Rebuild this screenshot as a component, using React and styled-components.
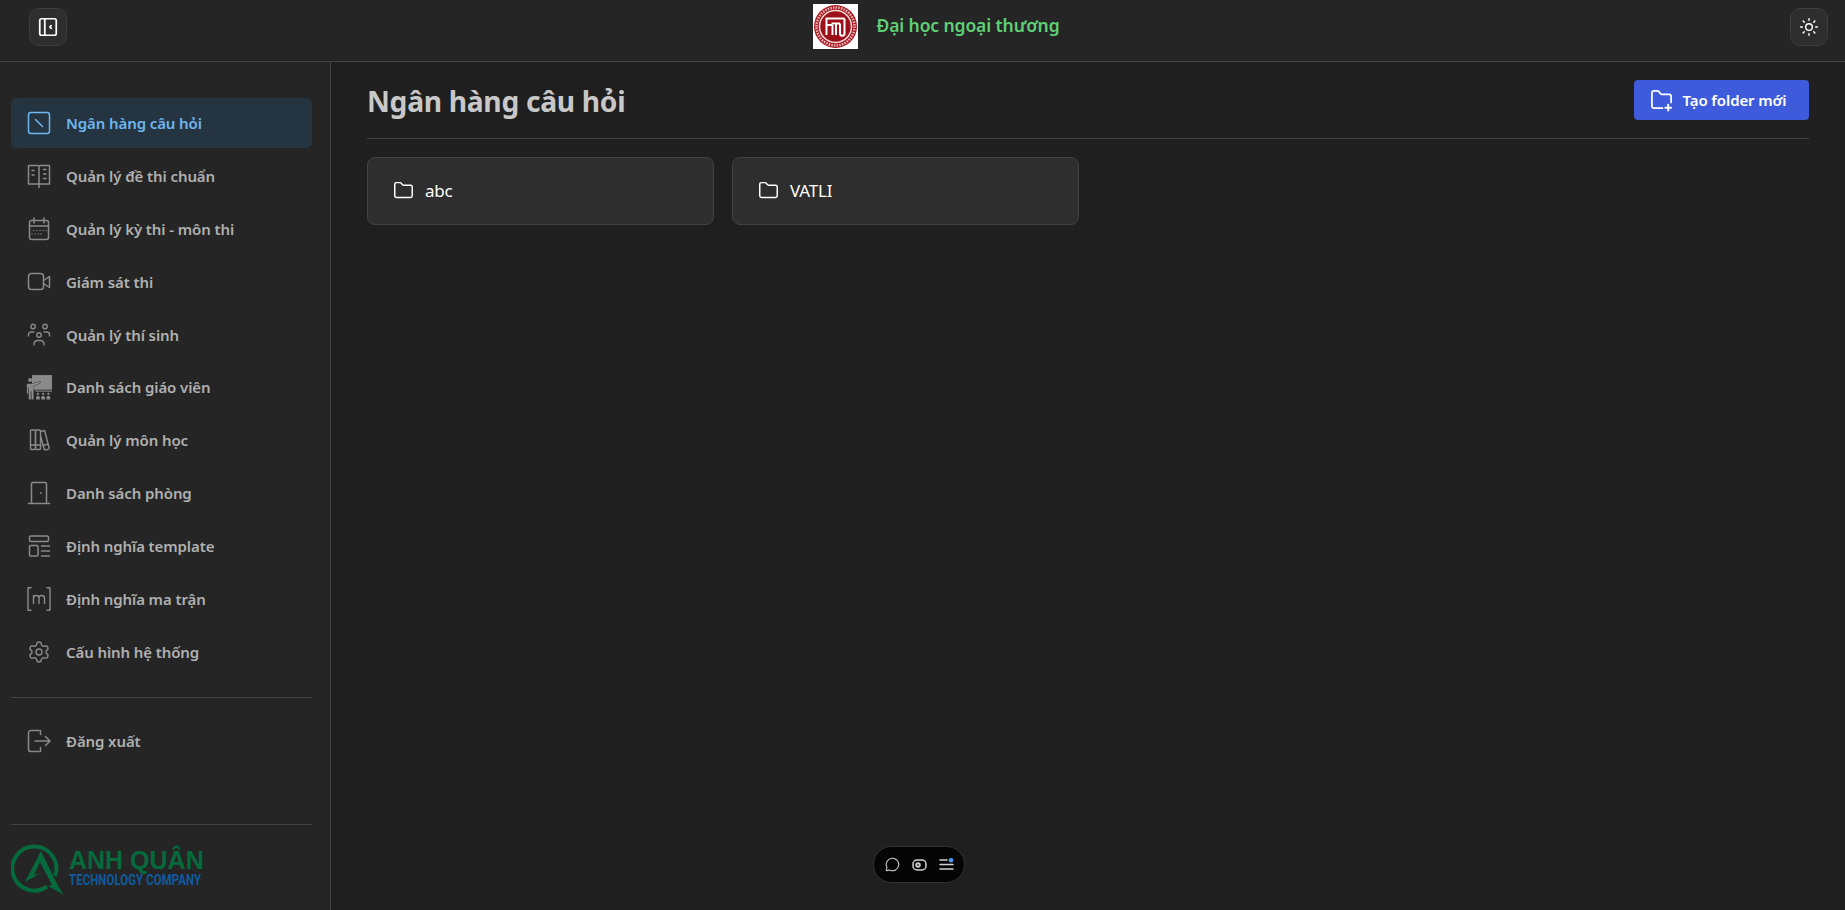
import React from 'react';
import styled, { createGlobalStyle } from 'styled-components';
import { Settings, Sun, Folder, MessageCircle } from 'lucide-react';

const Global = createGlobalStyle`
  html, body { margin: 0; padding: 0; height: 100%; background: #1f1f1f; }
  #root { height: 100%; }
  * { box-sizing: border-box; }
`;
const Page = styled.div`
  width: 1845px; height: 910px; overflow: hidden; display: flex; flex-direction: column;
  font-family: "Noto Sans", "Open Sans", sans-serif; background: #1f1f1f; position: relative;
`;
const Header = styled.header`
  height: 62px; flex: none; background: #252525; border-bottom: 1px solid #424242;
  display: flex; align-items: center; justify-content: space-between; padding: 0 17px 8px 29px;
`;
const IconButton = styled.button`
  width: 38px; height: 38px; border-radius: 10px; background: #2e2e2e; border: 1px solid #3d3d3d;
  display: flex; align-items: center; justify-content: center; color: #fff; padding: 0;
`;
const Brand = styled.div`display: flex; align-items: center; gap: 18px; margin-left: 16px;`;
const BrandName = styled.span`font-size: 17.5px; font-weight: 600; color: #5fcf75; letter-spacing: -0.1px; margin-top: -3px;`;
const Body = styled.div`flex: 1; display: flex; min-height: 0;`;
const Sidebar = styled.aside`
  width: 331px; flex: none; background: #252525; border-right: 1px solid #424242;
  padding: 36px 18px 0 11px; display: flex; flex-direction: column;
`;
const Nav = styled.nav`display: flex; flex-direction: column; gap: 2.9px;`;
const Item = styled.div`
  height: 50px; display: flex; align-items: center; gap: 15px; padding-left: 16px; border-radius: 6px;
  font-size: 15px; font-weight: 600; letter-spacing: -0.1px;
  background: ${p => (p.$active ? '#243441' : 'transparent')};
  color: ${p => (p.$active ? '#6fb6ee' : '#b0b0b0')};
  & > svg { flex: none; color: ${p => (p.$active ? '#6fb6ee' : '#8a8a8a')}; }
`;
const Rule = styled.div`height: 1px; background: #424242;`;
const TopRule = styled(Rule)`margin-top: 20.5px; margin-bottom: 17.5px;`;
const BottomRule = styled(Rule)`margin-top: 58px; margin-bottom: 17px;`;
const Logo = styled.div`display: flex; align-items: flex-start; gap: 3px; height: 56px;`;
const LogoText = styled.div`display: flex; flex-direction: column; margin-top: 5px;`;
const LogoName = styled.span`
  font-family: "Liberation Sans", sans-serif; font-weight: 700; font-size: 25px; line-height: 26px; color: #056a3c;
`;
const LogoSub = styled.span`
  font-family: "Roboto", sans-serif; font-weight: 700; font-size: 14px; line-height: 14px; color: #0d5ba0; letter-spacing: 0.15px;
  white-space: nowrap; transform: scaleX(0.81); transform-origin: left center; width: 150px;
`;
const Main = styled.main`flex: 1; padding: 18px 36px 0; min-width: 0; background: #1f1f1f;`;
const TitleRow = styled.div`
  height: 59px; display: flex; align-items: flex-start; justify-content: space-between; border-bottom: 1px solid #424242;
`;
const Title = styled.h1`
  margin: 0; font-size: 28.2px; line-height: 42px; font-weight: 700; color: #c8c8c8; letter-spacing: -0.3px;
`;
const PrimaryButton = styled.button`
  width: 175px; height: 40px; background: #3d5bdb; border: 0; border-radius: 4px; color: #fff;
  display: flex; align-items: center; justify-content: center; gap: 10px; padding: 0 7px 0 0;
  font-family: inherit; font-size: 15px; font-weight: 600; letter-spacing: -0.1px;
`;
const Cards = styled.div`display: flex; gap: 18px; margin-top: 18px;`;
const Card = styled.div`
  width: 347px; height: 68px; background: #2e2e2e; border: 1px solid #424242; border-radius: 8px;
  display: flex; align-items: center; gap: 11px; padding: 0 0 2px 25px; color: #fff;
  font-size: 17px; letter-spacing: -0.2px;
`;
const Dock = styled.div`
  position: absolute; left: 873px; top: 846px; width: 92px; height: 37px; border-radius: 19px;
  background: #050505; border: 1px solid #333; display: flex; align-items: center; justify-content: center; gap: 12px;
  color: #d0d0d0;
`;

const Svg = ({ children, size = 24, ...p }) => (
  <svg width={size} height={size} viewBox="0 0 24 24" fill="none" stroke="currentColor" strokeWidth="1.5" strokeLinecap="round" strokeLinejoin="round" {...p}>{children}</svg>
);
const TeacherSvg = styled(Svg)`margin: 0 -1px;`;
const SidebarToggle = () => (
  <Svg size={22} strokeWidth="1.9"><rect x="3" y="3" width="18" height="18" rx="2" /><path d="M8.500 3v18M15.500 10.500L14 12l1.500 1.500" /></Svg>
);
const Bank = () => (<Svg><rect x="1.500" y="1.500" width="21" height="21" rx="2.500" /><path d="M8.500 8.500l7 7" /></Svg>);
const Book = () => (<Svg><path d="M1.500 1.500h9.500l1 1 1-1h9.500v18.500h-9.500l-1 1-1-1H1.500zM12 2.500v21" /><path d="M5 6.500h2M5 11h2M16.500 5.500h2.500M16.500 10h2.500M16.500 14.500h2.500" /></Svg>);
const Calendar = () => (<Svg><rect x="2.500" y="3.500" width="19" height="19" rx="2" /><path d="M7 1v5M17 1v5M2.500 9h19" /><path d="M7 13.500h.01M10 13.500h.01M13 13.500h.01M16 13.500h.01M19 13.500h.01M5 17h.01M8 17h.01M11 17h.01M14 17h.01" strokeWidth="1.300" /></Svg>);
const Video = () => (<Svg><rect x="1.500" y="3.500" width="15" height="16" rx="3" /><path d="M16.500 10.500l6-4v11l-6-4" /></Svg>);
const Users = () => (<Svg strokeWidth="1.400"><circle cx="6" cy="3.500" r="2.200" /><circle cx="18" cy="3.500" r="2.200" /><circle cx="12" cy="12" r="2.200" /><path d="M1.500 13v-1.500a2.500 2.500 0 0 1 2.500-2.500h3M22.500 13v-1.500a2.500 2.500 0 0 0-2.500-2.500h-3M7 22v-1a3.500 3.500 0 0 1 3.500-3.500h3A3.500 3.500 0 0 1 17 21v1" /></Svg>);
const Teacher = () => (
  <TeacherSvg size={26} stroke="none" fill="currentColor">
    <rect x="5.500" y="1" width="18.500" height="13.500" />
    <rect x="8.500" y="15.300" width="15.500" height="1" />
    <circle cx="3.800" cy="5.500" r="1.800" />
    <path d="M.8 9h5.400l6.800-2.200v1.600L7 11v12.500H5v-7.500h-.6v7.500H2.500V12.500l-.5.300V18H.8z" stroke="#252525" strokeWidth=".7" style={{ paintOrder: 'stroke' }} />
    <circle cx="11" cy="18.300" r="1.100" /><circle cx="15.800" cy="18.300" r="1.100" /><circle cx="20.600" cy="18.300" r="1.100" />
    <path d="M9.300 23.500v-2.500l1.700-1 1.700 1v2.500zM14.100 23.500v-2.500l1.700-1 1.700 1v2.500zM18.900 23.500v-2.500l1.700-1 1.700 1v2.500z" />
  </TeacherSvg>
);
const Books = () => (<Svg strokeWidth="1.400"><rect x="3.500" y="2" width="5" height="19.500" rx="1" /><rect x="8.500" y="2" width="5" height="19.500" rx="1" /><path d="M13.600 3.500l4-1 4.500 17.500a1 1 0 0 1-.7 1.200l-3 .7a1 1 0 0 1-1.200-.7L13.600 8M3.500 17h10M15.500 17.500l5-1.300" /></Svg>);
const Door = () => (<Svg><path d="M1.500 22.500h21M4.500 22.500V3a1.500 1.500 0 0 1 1.500-1.500h12A1.500 1.500 0 0 1 19.500 3v19.500" /><path d="M14 12h.01" strokeWidth="1.800" /></Svg>);
const Template = () => (<Svg strokeWidth="1.500"><rect x="2.500" y="2" width="19" height="5.500" rx="1.500" /><rect x="2.500" y="11.500" width="8.500" height="10.500" rx="1" /><path d="M14.500 12h8M14.500 17h8M14.500 22h8" /></Svg>);
const Matrix = () => (<Svg strokeWidth="1.400"><path d="M4 .8H1v22.400h3M20 .8h3v22.400h-3" /><path d="M6.500 16.500V8.500M6.500 11c0-1.500 1-2.500 2.500-2.500s3 1 3 2.500v5.500M12 11c0-1.500 1-2.500 2.500-2.500s3 1 3 2.500v5.500" /></Svg>);
const Logout = () => (<Svg><path d="M12 1.500H4A2.500 2.500 0 0 0 1.500 4v16A2.500 2.500 0 0 0 4 22.500h8M13.500 22.500v-4M13.500 1.500v4" /><path d="M8 12h15M18.500 7.500L23 12l-4.500 4.500" /></Svg>);
const NewFolder = () => (
  <Svg size={23} strokeWidth="1.800"><path d="M13 20H4a2 2 0 0 1-2-2V4a2 2 0 0 1 2-2h4.500l3 3.500H20a2 2 0 0 1 2 2V14" /><path d="M19 16.500v6M16 19.500h6" strokeWidth="2" /></Svg>
);

const Seal = () => (
  <svg width="45" height="45" viewBox="0 0 45 45">
    <rect width="45" height="45" fill="#fff" />
    <circle cx="22.500" cy="22.500" r="21.500" fill="#ab1a22" />
    <circle cx="22.500" cy="22.500" r="19" fill="none" stroke="#e8b9bc" strokeWidth="2.500" strokeDasharray="1.500 1.200" />
    <circle cx="22.500" cy="22.500" r="16" fill="#9c1019" stroke="#f3dede" strokeWidth="1.500" />
    <path d="M13.500 31V14.500h18M13.500 21h6M19.500 21v10M18.500 19.500h8.500M23 19.500V31M27 19.500v10a2 2 0 0 0 4.500 0V14.500" fill="none" stroke="#fff" strokeWidth="2" />
  </svg>
);
const LogoMark = () => (
  <svg width="55" height="56" viewBox="0 0 55 56" fill="none">
    <path d="M36 44.500A22 22 0 1 1 44 34" stroke="#056a3c" strokeWidth="4" />
    <path d="M14 40L30 9l17 35 6 9-16-9 4-1L29 20 23 33l7-2-16 9z" fill="#056a3c" />
  </svg>
);
const ToggleIcon = () => (
  <svg width="15" height="12" viewBox="0 0 15 12" fill="none" stroke="currentColor" strokeWidth="1.500">
    <rect x="1" y="1" width="13" height="10" rx="4" /><circle cx="6" cy="6" r="2" fill="currentColor" fillOpacity=".5" />
  </svg>
);
const MenuIcon = () => (
  <svg width="15" height="13" viewBox="0 0 15 13" stroke="currentColor" strokeWidth="1.500" strokeLinecap="round">
    <path d="M1 2h7M1 6.500h13M1 11h13" /><circle cx="12" cy="2.300" r="2.300" fill="#4a9bf5" stroke="none" />
  </svg>
);

const items = [
  ['Ngân hàng câu hỏi', Bank, true], ['Quản lý đề thi chuẩn', Book], ['Quản lý kỳ thi - môn thi', Calendar],
  ['Giám sát thi', Video], ['Quản lý thí sinh', Users], ['Danh sách giáo viên', Teacher], ['Quản lý môn học', Books],
  ['Danh sách phòng', Door], ['Định nghĩa template', Template], ['Định nghĩa ma trận', Matrix],
  ['Cấu hình hệ thống', () => <Settings size={24} strokeWidth={1.4} />],
];

export default function App() {
  return (
    <Page>
      <Global />
      <Header>
        <IconButton><SidebarToggle /></IconButton>
        <Brand><Seal /><BrandName>Đại học ngoại thương</BrandName></Brand>
        <IconButton><Sun size={20} strokeWidth={1.7} /></IconButton>
      </Header>
      <Body>
        <Sidebar>
          <Nav>
            {items.map(([label, Icon, active]) => (
              <Item key={label} $active={active}><Icon />{label}</Item>
            ))}
          </Nav>
          <TopRule />
          <Item><Logout />Đăng xuất</Item>
          <BottomRule />
          <Logo>
            <LogoMark />
            <LogoText>
              <LogoName>ANH QUÂN</LogoName>
              <LogoSub>TECHNOLOGY COMPANY</LogoSub>
            </LogoText>
          </Logo>
        </Sidebar>
        <Main>
          <TitleRow>
            <Title>Ngân hàng câu hỏi</Title>
            <PrimaryButton><NewFolder />Tạo folder mới</PrimaryButton>
          </TitleRow>
          <Cards>
            <Card><Folder size={21} strokeWidth={1.7} />abc</Card>
            <Card><Folder size={21} strokeWidth={1.7} />VATLI</Card>
          </Cards>
        </Main>
      </Body>
      <Dock><MessageCircle size={15} strokeWidth={1.7} /><ToggleIcon /><MenuIcon /></Dock>
    </Page>
  );
}
